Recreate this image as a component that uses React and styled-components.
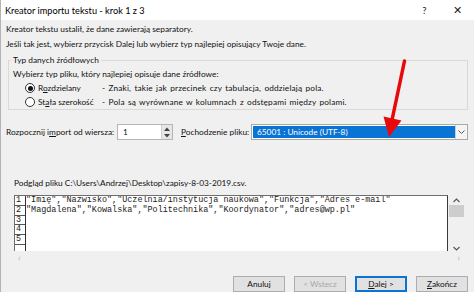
import React from "react";
import styled, { createGlobalStyle } from "styled-components";

const Global = createGlobalStyle`
  html, body { margin: 0; padding: 0; background: #f0f0f0; }
  body { font-family: Lato, "Noto Sans", sans-serif; }
  * { box-sizing: border-box; }
`;

const Window = styled.div`
  position: relative;
  width: 474px;
  height: 292px;
  overflow: hidden;
  background: #f0f0f0;
  color: #111;
  font-size: 8.3px;
  border-left: 1px solid #b4b4b4;
`;

const TitleBar = styled.div`
  height: 20px;
  background: #fff;
  display: flex;
  align-items: center;
  padding-left: 4px;
  font-size: 9.2px;
  color: #000;
`;

const Title = styled.div`
  flex: 1;
`;

const TitleButton = styled.div`
  width: 33px;
  text-align: center;
  font-size: ${(p) => p.$size || 9}px;
  color: #222;
`;

const Body = styled.div`
  padding: 2px 6px 0 5px;
  display: flex;
  flex-direction: column;
`;

const Line = styled.div`
  height: 15px;
  line-height: 15px;
  white-space: nowrap;
`;

const Group = styled.fieldset`
  margin: 1px 0 0 2px;
  padding: 0 0 0 4px;
  border: 1px solid #d9d9d9;
  min-width: 0;
`;

const Legend = styled.legend`
  padding: 0 2px;
  margin-left: -2px;
  height: 15px;
  line-height: 15px;
`;

const GroupText = styled.div`
  height: 13px;
  line-height: 13px;
`;

const RadioRow = styled.div`
  display: flex;
  align-items: center;
  height: 14px;
  padding-left: 12px;
  white-space: nowrap;
`;

const Radio = styled.span`
  width: 10px;
  height: 10px;
  border-radius: 50%;
  border: 1px solid #333;
  background: #fff;
  display: flex;
  align-items: center;
  justify-content: center;
  &::after {
    content: "";
    display: ${(p) => (p.$checked ? "block" : "none")};
    width: 5px;
    height: 5px;
    border-radius: 50%;
    background: #111;
  }
`;

const RadioLabel = styled.span`
  width: 64px;
  margin-left: 3px;
`;

const RadioDesc = styled.span`
  letter-spacing: 0.15px;
  word-spacing: 1px;
`;

const U = styled.span`
  text-decoration: underline;
`;

const ImportRow = styled.div`
  display: flex;
  align-items: center;
  height: 16px;
  margin-top: 14px;
  white-space: nowrap;
`;

const ImportLabel = styled.span`
  width: 111px;
`;

const Spin = styled.div`
  width: 56px;
  height: 16px;
  display: flex;
  border: 1px solid #b5b5b5;
  background: #fff;
`;

const SpinValue = styled.div`
  flex: 1;
  padding-left: 5px;
  line-height: 14px;
`;

const SpinButtons = styled.div`
  width: 11px;
  display: flex;
  flex-direction: column;
  background: #e6e6e6;
  border-left: 1px solid #d0d0d0;
`;

const SpinArrow = styled.div`
  flex: 1;
  display: flex;
  align-items: center;
  justify-content: center;
  svg { display: block; }
`;

const OriginLabel = styled.span`
  margin-left: 8px;
  width: 70px;
`;

const Select = styled.div`
  flex: 1;
  height: 16px;
  display: flex;
  border: 1px solid #a9a9a9;
  background: #fff;
  padding: 1px;
`;

const SelectValue = styled.div`
  flex: 1;
  background: #0a74d4;
  color: #fff;
  padding-left: 4px;
  line-height: 12px;
`;

const SelectButton = styled.div`
  width: 12px;
  display: flex;
  align-items: center;
  justify-content: center;
  border-left: 1px solid #ccc;
  background: #f4f4f4;
  margin: -1px -1px -1px 0;
`;

const PreviewLabel = styled.div`
  margin-top: 36px;
  padding-left: 8px;
  height: 14px;
  line-height: 14px;
  white-space: nowrap;
`;

const PreviewArea = styled.div`
  margin: 5px 0 0 8px;
  width: 451px;
  display: flex;
`;

const PreviewBox = styled.div`
  flex: 1;
  height: 56px;
  background: #fff;
  border-top: 1px solid #6e6e6e;
  border-left: 1px solid #6e6e6e;
  border-right: 1px solid #3a3a3a;
  display: flex;
  overflow: hidden;
`;

const NumCol = styled.div`
  width: 11px;
  flex-shrink: 0;
  border-right: 1px solid #333;
  display: flex;
  flex-direction: column;
`;

const Num = styled.div`
  height: 9.8px;
  line-height: 9px;
  font-family: "Liberation Mono", monospace;
  font-size: 8.4px;
  padding-left: 1px;
  border-bottom: 1px solid #555;
  color: #222;
`;

const DataCol = styled.div`
  flex: 1;
  display: flex;
  flex-direction: column;
`;

const DataLine = styled.div`
  height: 9.8px;
  line-height: 9px;
  font-family: "Liberation Mono", monospace;
  font-size: 8.45px;
  white-space: pre;
  color: #222;
`;

const VScroll = styled.div`
  width: 17px;
  height: 56px;
  display: flex;
  flex-direction: column;
  align-items: center;
  padding-top: 3px;
`;

const Thumb = styled.div`
  width: 15px;
  height: 12px;
  background: #cdcdcd;
  margin-top: 2px;
`;

const VSpacer = styled.div`
  flex: 1;
`;

const HScroll = styled.div`
  margin-left: 8px;
  width: 451px;
  height: 12px;
  display: flex;
  align-items: center;
  justify-content: space-between;
  padding: 0 5px 0 4px;
  color: #b0b0b0;
  font-size: 9px;
`;

const Buttons = styled.div`
  margin-top: 13px;
  display: flex;
  justify-content: flex-end;
  gap: 9px;
`;

const Button = styled.div`
  width: 52px;
  height: 16px;
  line-height: 14px;
  text-align: center;
  background: #e1e1e1;
  border: 1px solid ${(p) => (p.$default ? "#0a74d4" : "#adadad")};
  color: ${(p) => (p.$disabled ? "#a8a8a8" : "#111")};
  box-shadow: ${(p) => (p.$default ? "inset 0 0 0 1px #0a74d4" : "none")};
`;

const Arrow = styled.svg`
  position: absolute;
  left: 0;
  top: 0;
  pointer-events: none;
`;

const Chevron = ({ up }) => (
  <svg width="6" height="4" viewBox="0 0 6 4">
    <path d={up ? "M0 4 L3 0.5 L6 4 Z" : "M0 0 L3 3.5 L6 0 Z"} fill="#444" />
  </svg>
);

const lines = [
  '"Imię","Nazwisko","Uczelnia/instytucja naukowa","Funkcja","Adres e-mail"',
  '"Magdalena","Kowalska","Politechnika","Koordynator","adres@wp.pl"',
  "",
  "",
  "",
];

export default function App() {
  return (
    <>
      <Global />
      <Window>
        <TitleBar>
          <Title>Kreator importu tekstu - krok 1 z 3</Title>
          <TitleButton $size={9.5}>?</TitleButton>
          <TitleButton $size={11}>✕</TitleButton>
        </TitleBar>
        <Body>
          <Line>Kreator tekstu ustalił, że dane zawierają separatory.</Line>
          <Line>
            Jeśli tak jest, wybierz przycisk Dalej lub wybierz typ najlepiej opisujący Twoje dane.
          </Line>
          <Group>
            <Legend>Typ danych źródłowych</Legend>
            <GroupText>Wybierz typ pliku, który najlepiej opisuje dane źródłowe:</GroupText>
            <RadioRow>
              <Radio $checked />
              <RadioLabel>
                R<U>o</U>zdzielany
              </RadioLabel>
              <RadioDesc>- Znaki, takie jak przecinek czy tabulacja, oddzielają pola.</RadioDesc>
            </RadioRow>
            <RadioRow>
              <Radio />
              <RadioLabel>
                St<U>a</U>ła szerokość
              </RadioLabel>
              <RadioDesc>- Pola są wyrównane w kolumnach z odstępami między polami.</RadioDesc>
            </RadioRow>
          </Group>
          <ImportRow>
            <ImportLabel>
              Rozpocznij i<U>m</U>port od wiersza:
            </ImportLabel>
            <Spin>
              <SpinValue>1</SpinValue>
              <SpinButtons>
                <SpinArrow>
                  <Chevron up />
                </SpinArrow>
                <SpinArrow>
                  <Chevron />
                </SpinArrow>
              </SpinButtons>
            </Spin>
            <OriginLabel>
              <U>P</U>ochodzenie pliku:
            </OriginLabel>
            <Select>
              <SelectValue>65001 : Unicode (UTF-8)</SelectValue>
              <SelectButton>
                <svg width="7" height="4" viewBox="0 0 7 4">
                  <path d="M0.5 0.5 L3.5 3.5 L6.5 0.5" fill="none" stroke="#555" strokeWidth="1" />
                </svg>
              </SelectButton>
            </Select>
          </ImportRow>
          <PreviewLabel>Podgląd pliku C:\Users\Andrzej\Desktop\zapisy-8-03-2019.csv.</PreviewLabel>
          <PreviewArea>
            <PreviewBox>
              <NumCol>
                {lines.map((_, i) => (
                  <Num key={i}>{i + 1}</Num>
                ))}
              </NumCol>
              <DataCol>
                {lines.map((l, i) => (
                  <DataLine key={i}>{l}</DataLine>
                ))}
              </DataCol>
            </PreviewBox>
            <VScroll>
              <svg width="7" height="5" viewBox="0 0 7 5">
                <path d="M0.5 4 L3.5 1 L6.5 4" fill="none" stroke="#555" strokeWidth="1.1" />
              </svg>
              <Thumb />
              <VSpacer />
              <svg width="7" height="5" viewBox="0 0 7 5">
                <path d="M0.5 1 L3.5 4 L6.5 1" fill="none" stroke="#555" strokeWidth="1.1" />
              </svg>
            </VScroll>
          </PreviewArea>
          <HScroll>
            <span>‹</span>
            <span>›</span>
          </HScroll>
          <Buttons>
            <Button>Anuluj</Button>
            <Button $disabled>&lt; Wstecz</Button>
            <Button $default>
              <U>D</U>alej &gt;
            </Button>
            <Button>
              <U>Z</U>akończ
            </Button>
          </Buttons>
        </Body>
        <Arrow width="474" height="292" viewBox="0 0 474 292">
          <line x1="403.5" y1="61" x2="391" y2="120" stroke="#e80a0a" strokeWidth="3.5" strokeLinecap="round" />
          <polygon points="382.5,116.5 400.5,120.5 388,137" fill="#e80a0a" />
        </Arrow>
      </Window>
    </>
  );
}
